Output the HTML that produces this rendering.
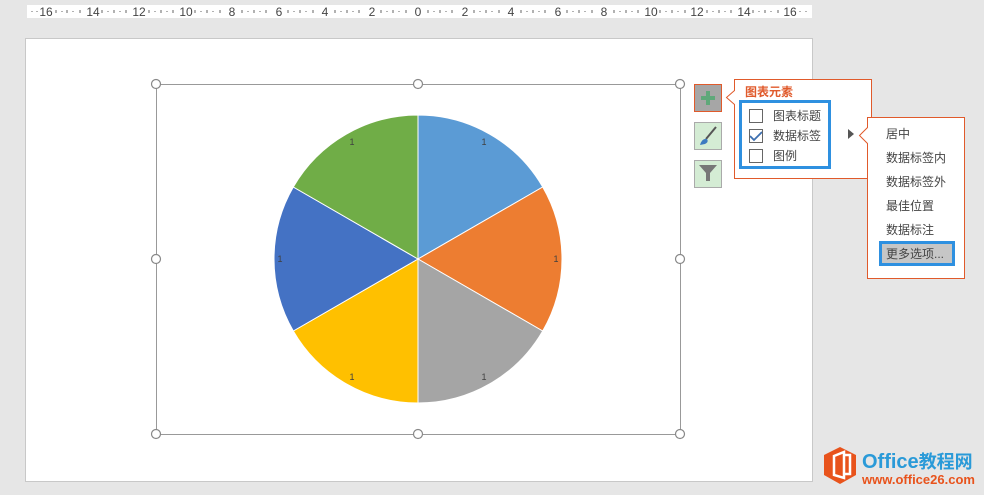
<!DOCTYPE html>
<html><head><meta charset="utf-8"><style>
body{margin:0;width:984px;height:495px;background:#e6e6e6;position:relative;overflow:hidden;font-family:"Liberation Sans","Noto Sans CJK SC",sans-serif}
.abs{position:absolute}
.cn{font-family:"Liberation Sans","Noto Sans CJK SC",sans-serif;font-size:12px;color:#444}
.cb{position:absolute;width:12px;height:12px;border:1px solid #666;background:#fff}
</style></head><body>
<svg class="abs" style="left:0;top:0" width="984" height="495">
<rect x="27" y="5" width="785" height="13" fill="#fff"/>
<g font-family="Liberation Sans" font-size="12" fill="#444" text-anchor="middle">
<text x="46" y="16">16</text><text x="93" y="16">14</text><text x="139" y="16">12</text><text x="186" y="16">10</text>
<text x="232" y="16">8</text><text x="279" y="16">6</text><text x="325" y="16">4</text><text x="372" y="16">2</text>
<text x="418" y="16">0</text><text x="465" y="16">2</text><text x="511" y="16">4</text><text x="558" y="16">6</text>
<text x="604" y="16">8</text><text x="651" y="16">10</text><text x="697" y="16">12</text><text x="744" y="16">14</text><text x="790" y="16">16</text>
</g>
<g stroke="#666" stroke-width="1">
<path d="M32 11v1M37 11v1M56 10v3M62 11v1M67 10v3M73 11v1M80 10v3M102 10v3M108 11v1M114 10v3M120 11v1M126 10v3M149 10v3M155 11v1M161 10v3M167 11v1M173 10v3M195 10v3M201 11v1M207 10v3M213 11v1M220 10v3M242 10v3M248 11v1M254 10v3M260 11v1M266 10v3M288 10v3M294 11v1M300 10v3M306 11v1M313 10v3M335 10v3M341 11v1M347 10v3M353 11v1M359 10v3M381 10v3M387 11v1M393 10v3M399 11v1M406 10v3M428 10v3M434 11v1M440 10v3M446 11v1M452 10v3M474 10v3M480 11v1M486 10v3M492 11v1M499 10v3M521 10v3M527 11v1M533 10v3M539 11v1M545 10v3M567 10v3M573 11v1M579 10v3M585 11v1M592 10v3M614 10v3M620 11v1M626 10v3M632 11v1M638 10v3M660 10v3M666 11v1M672 10v3M678 11v1M685 10v3M707 10v3M713 11v1M719 10v3M725 11v1M731 10v3M753 10v3M759 11v1M765 10v3M771 11v1M778 10v3M800 11v1M806 11v1"/>
</g>
<rect x="25.5" y="38.5" width="787" height="443" fill="#fff" stroke="#c8c8c8"/>
<rect x="156.5" y="84.5" width="524" height="350" fill="none" stroke="#999"/>
<g fill="#fff" stroke="#888" stroke-width="1.2">
<circle cx="156" cy="84" r="4.5"/><circle cx="418" cy="84" r="4.5"/><circle cx="680" cy="84" r="4.5"/>
<circle cx="156" cy="259" r="4.5"/><circle cx="680" cy="259" r="4.5"/>
<circle cx="156" cy="434" r="4.5"/><circle cx="418" cy="434" r="4.5"/><circle cx="680" cy="434" r="4.5"/>
</g>
<g stroke="#fff" stroke-width="1">
<path d="M418 259L418 115A144 144 0 0 1 542.7 187Z" fill="#5b9bd5"/>
<path d="M418 259L542.7 187A144 144 0 0 1 542.7 331Z" fill="#ed7d31"/>
<path d="M418 259L542.7 331A144 144 0 0 1 418 403Z" fill="#a5a5a5"/>
<path d="M418 259L418 403A144 144 0 0 1 293.3 331Z" fill="#ffc000"/>
<path d="M418 259L293.3 331A144 144 0 0 1 293.3 187Z" fill="#4472c4"/>
<path d="M418 259L293.3 187A144 144 0 0 1 418 115Z" fill="#70ad47"/>
</g>
<g font-family="Liberation Sans" font-size="9" fill="#404040" text-anchor="middle">
<text x="484" y="145">1</text><text x="556" y="262">1</text><text x="484" y="380">1</text>
<text x="352" y="380">1</text><text x="280" y="262">1</text><text x="352" y="145">1</text>
</g>
<!-- side buttons -->
<rect x="694.5" y="84.5" width="27" height="27" fill="#a6a6a6" stroke="#e05a2b"/>
<path d="M708 91v14M701 98h14" stroke="#5fa87a" stroke-width="4"/>
<rect x="694.5" y="122.5" width="27" height="27" fill="#d4ecd4" stroke="#aaa"/>
<path d="M716 127L706 139" stroke="#555" stroke-width="2"/><path d="M700 145q2-7 7-6q2 3-2 5z" fill="#3c7ac0"/>
<rect x="694.5" y="160.5" width="27" height="27" fill="#d4ecd4" stroke="#aaa"/>
<path d="M699 165h18l-7 8v8h-4v-8z" fill="#777"/>
<!-- popup 1 -->
<path d="M734.5 79.5h137v99h-137v-74l-8-7 8-7z" fill="#fff" stroke="#e05a2b"/>
<rect x="740.5" y="101.5" width="89" height="66" fill="none" stroke="#2e90e0" stroke-width="3"/>
<path d="M848 129l6 5-6 5z" fill="#555"/>
<!-- popup 2 -->
<path d="M867.5 117.5h97v161h-97v-135l-8-8 8-8z" fill="#fff" stroke="#e05a2b"/>
<rect x="880.5" y="242.5" width="73" height="22" fill="#c6c6c6" stroke="#2e90e0" stroke-width="3"/>
<path d="M750 136l4 4 8-8" stroke="#3c6fb0" stroke-width="1.8" fill="none"/>
<!-- logo -->
<path d="M840 447l16 8v20l-16 9-16-9v-20z" fill="#e8531c"/>
<path d="M834 456l10-4v26l-10-3z M844 455h6v19h-6" fill="none" stroke="#fff" stroke-width="2.5"/>
<text x="862" y="468" font-family="Liberation Sans" font-weight="bold" font-size="20" fill="#2a9ad8">Office<tspan font-family="Noto Sans CJK SC" font-size="18">教程网</tspan></text>
<text x="862" y="484" font-family="Liberation Sans" font-weight="bold" font-size="13" fill="#e8531c">www.office26.com</text>
</svg>
<div class="abs cn" style="left:745px;top:83px;color:#e05a2b;font-weight:bold">图表元素</div>
<div class="cb" style="left:749px;top:109px"></div>
<div class="cb" style="left:749px;top:129px;background:none"></div>
<div class="cb" style="left:749px;top:149px"></div>
<div class="abs cn" style="left:773px;top:107px">图表标题</div>
<div class="abs cn" style="left:773px;top:127px">数据标签</div>
<div class="abs cn" style="left:773px;top:147px">图例</div>
<div class="abs cn" style="left:886px;top:125px">居中</div>
<div class="abs cn" style="left:886px;top:149px">数据标签内</div>
<div class="abs cn" style="left:886px;top:173px">数据标签外</div>
<div class="abs cn" style="left:886px;top:197px">最佳位置</div>
<div class="abs cn" style="left:886px;top:221px">数据标注</div>
<div class="abs cn" style="left:886px;top:245px">更多选项...</div>
</body></html>
